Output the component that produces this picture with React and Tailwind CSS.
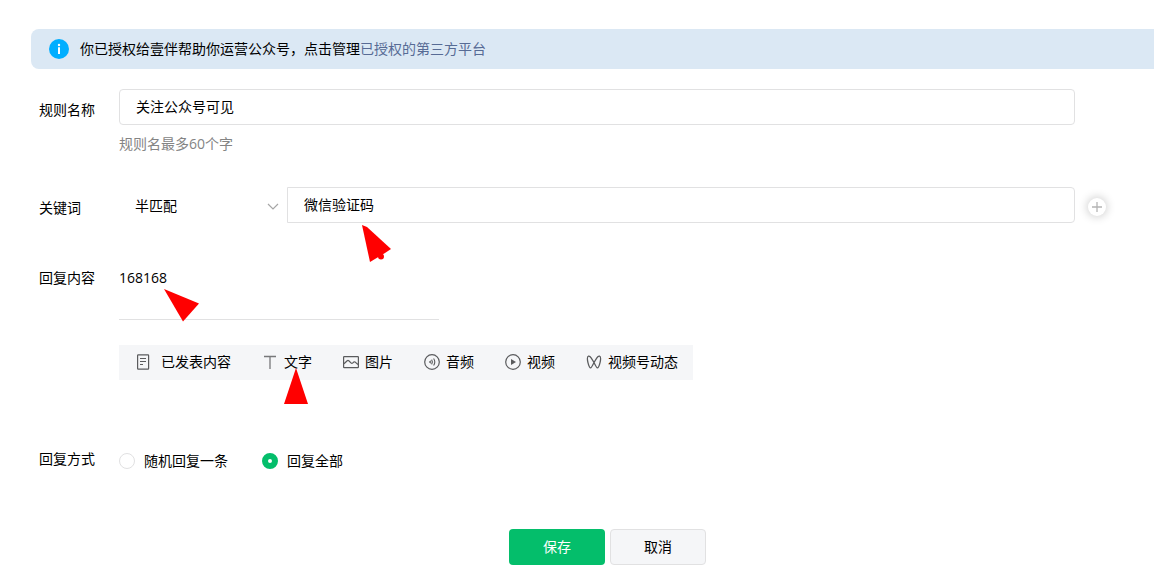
import { useState } from 'react';

const ArticleIcon = () => (
    <svg width="16" height="16" viewBox="0 0 16 16" fill="none" stroke="#5a5b5d" strokeWidth="1.2">
        <rect x="2.6" y="0.8" width="11" height="14.4" rx="0.6" />
        <path d="M5 4.5h6M5 7.5h6M5 10.5h3" />
    </svg>
);

const TextIcon = () => (
    <svg width="16" height="16" viewBox="0 0 16 16" fill="none" stroke="#77787a" strokeWidth="1.3">
        <path d="M2 2.5h12M8 2.5V15" />
    </svg>
);

const ImageIcon = () => (
    <svg width="16" height="16" viewBox="0 0 16 16" fill="none" stroke="#5a5b5d" strokeWidth="1.2">
        <rect x="0.6" y="2.6" width="14.8" height="11" rx="0.6" />
        <path d="M1 9.8l3.2-3q.8-.7 1.6 0l2.4 2.3q.7.6 1.4 0l1.2-1q.7-.5 1.4 0l2.8 2.4" />
    </svg>
);

const AudioIcon = () => (
    <svg width="16" height="16" viewBox="0 0 16 16" fill="none" stroke="#5a5b5d">
        <circle cx="8" cy="8" r="7.3" strokeWidth="1.2" />
        <path d="M4.8 8l2-1.8v3.6z" fill="#5a5b5d" stroke="none" />
        <path d="M7.6 5.6q1.6 2.4 0 4.8M9.6 4.5q2.4 3.5 0 7" strokeWidth="1.1" />
    </svg>
);

const VideoIcon = () => (
    <svg width="16" height="16" viewBox="0 0 16 16" fill="none" stroke="#5a5b5d" strokeWidth="1.2">
        <circle cx="8" cy="8" r="7.3" />
        <path d="M6 5l5 3-5 3z" fill="#5a5b5d" stroke="none" />
    </svg>
);

const ChannelIcon = () => (
    <svg width="16" height="16" viewBox="0 0 16 16" fill="none" stroke="#5a5b5d" strokeWidth="1.3" strokeLinejoin="round">
        <path d="M8 8.5L5.3 4.2C4.3 2.6 3.3 2 2.5 2.2 1 2.6 1.2 5.2 1.9 8.3c.8 3.3 1.8 5.6 2.7 5.6.8 0 1.5-1.4 3.4-5.4l2.7-4.3c1-1.600 2-2.200 2.800-2 1.500.4 1.300 3 .6 6.100-.8 3.300-1.800 5.600-2.700 5.600-.8 0-1.500-1.400-3.400-5.400z" />
    </svg>
);

const mediaTypes = [
    { name: '文字', icon: <TextIcon />, marked: true },
    { name: '图片', icon: <ImageIcon /> },
    { name: '音频', icon: <AudioIcon /> },
    { name: '视频', icon: <VideoIcon /> },
    { name: '视频号动态', icon: <ChannelIcon /> },
];

const App = () => {
    const [ruleName, setRuleName] = useState('关注公众号可见');
    const [matchType, setMatchType] = useState('half');
    const [keyword, setKeyword] = useState('微信验证码');
    const [replyMode, setReplyMode] = useState('all');

    return (
        <div className="bg-white pt-[29px] pb-5 pl-[31px] font-['Open_Sans','Noto_Sans_CJK_SC',sans-serif] text-[14px] leading-5 text-black">
            <div className="flex h-10 items-center rounded-l-lg bg-[#dbe8f4] pl-[18px]">
                <svg className="mr-[11px] shrink-0" width="20" height="20" viewBox="0 0 20 20">
                    <circle cx="10" cy="10" r="10" fill="#00aeff" />
                    <path d="M9 8.2h2V15H9z" fill="#fff" />
                    <circle cx="10" cy="6" r="1.2" fill="#fff" />
                </svg>
                <p>
                    你已授权给壹伴帮助你运营公众号，点击管理
                    <a href="#platforms" className="text-[#576b95]">已授权的第三方平台</a>
                </p>
            </div>

            <form className="mt-5 pl-2" onSubmit={(e) => e.preventDefault()}>
                <div className="flex items-start pr-[79px]">
                    <label htmlFor="ruleName" className="w-20 shrink-0 pt-[11px]">规则名称</label>
                    <div className="flex-1">
                        <input
                            id="ruleName"
                            type="text"
                            value={ruleName}
                            onChange={(e) => setRuleName(e.target.value)}
                            className="block h-9 w-full rounded border border-[#e1e1e2] px-4 pb-[2px] outline-none"
                        />
                        <p className="mt-[9px] text-[#848484]">规则名最多60个字</p>
                    </div>
                </div>

                <div className="mt-[33px] flex items-start pr-12">
                    <label htmlFor="keyword" className="w-20 shrink-0 pt-[11px]">关键词</label>
                    <div className="relative w-[168px] shrink-0">
                        <select
                            aria-label="匹配方式"
                            value={matchType}
                            onChange={(e) => setMatchType(e.target.value)}
                            className="h-9 w-full appearance-none bg-white px-4 pt-[2px] outline-none"
                        >
                            <option value="half">半匹配</option>
                            <option value="full">全匹配</option>
                        </select>
                        <svg className="pointer-events-none absolute top-4 right-2" width="12" height="8" viewBox="0 0 12 8" fill="none" stroke="#a6a6a6" strokeWidth="1.2">
                            <path d="M1 1l5 5 5-5" />
                        </svg>
                    </div>
                    <div className="relative flex-1">
                        <input
                            id="keyword"
                            type="text"
                            value={keyword}
                            onChange={(e) => setKeyword(e.target.value)}
                            className="block h-9 w-full rounded-r border border-[#e1e1e2] px-4 pb-[2px] outline-none"
                        />
                        <svg className="pointer-events-none absolute top-[38px] left-[75px]" width="30" height="38" viewBox="0 0 30 38" fill="#f00">
                            <path d="M0 0L5 2 29 24 23 28 8 37z" />
                            <circle cx="19" cy="31.5" r="3" />
                        </svg>
                    </div>
                    <button
                        type="button"
                        aria-label="添加关键词"
                        className="mt-[11px] ml-[13px] flex size-[18px] shrink-0 items-center justify-center rounded-full bg-white shadow-[0_0_10px_1px_rgba(0,0,0,0.2)]"
                    >
                        <svg width="12" height="12" viewBox="0 0 12 12" stroke="#b4b4b4" strokeWidth="1.3">
                            <path d="M6 1v10M1 6h10" />
                        </svg>
                    </button>
                </div>

                <div className="mt-[45px] flex items-start">
                    <span className="w-20 shrink-0">回复内容</span>
                    <div>
                        <div className="relative w-80 border-b border-[#e1e1e2] pb-[31px]">
                            168168
                            <svg className="pointer-events-none absolute top-[21px] left-[45px]" width="36" height="33" viewBox="0 0 36 33" fill="#f00">
                                <path d="M0 0l35 14.5-16 18z" />
                            </svg>
                        </div>
                        <div className="mt-[25px] flex h-[35px] items-center gap-[31px] bg-[#f5f6f8] pr-[15px] pb-[2px] pl-4">
                            <button type="button" className="flex items-center gap-[10px] whitespace-nowrap">
                                <ArticleIcon />
                                已发表内容
                            </button>
                            {mediaTypes.map((type) => (
                                <button key={type.name} type="button" className="relative flex items-center gap-[6px] whitespace-nowrap">
                                    {type.icon}
                                    {type.name}
                                    {type.marked && (
                                        <svg className="pointer-events-none absolute top-4 left-[22px]" width="24" height="36" viewBox="0 0 24 36" fill="#f00">
                                            <path d="M12 0l12 36H0z" />
                                        </svg>
                                    )}
                                </button>
                            ))}
                        </div>
                    </div>
                </div>

                <fieldset className="mt-[69px] flex items-start">
                    <legend className="float-left w-20 shrink-0">回复方式</legend>
                    <div className="flex gap-[34px] pt-[2px]">
                        <label className="flex items-center gap-[9px]">
                            <input
                                type="radio"
                                name="replyMode"
                                checked={replyMode === 'random'}
                                onChange={() => setReplyMode('random')}
                                className="size-4 appearance-none rounded-full border border-[#e1e1e2] bg-white checked:border-[6px] checked:border-[#04be6b]"
                            />
                            随机回复一条
                        </label>
                        <label className="flex items-center gap-[9px]">
                            <input
                                type="radio"
                                name="replyMode"
                                checked={replyMode === 'all'}
                                onChange={() => setReplyMode('all')}
                                className="size-4 appearance-none rounded-full border border-[#e1e1e2] bg-white checked:border-[6px] checked:border-[#04be6b]"
                            />
                            回复全部
                        </label>
                    </div>
                </fieldset>

                <div className="mt-[58px] flex justify-center gap-[5px] pl-[22px]">
                    <button type="submit" className="h-9 w-24 rounded bg-[#04be6b] text-white">保存</button>
                    <button type="button" className="h-9 w-24 rounded border border-[#e1e1e2] bg-[#f5f6f8]">取消</button>
                </div>
            </form>
        </div>
    );
};

export default App;
